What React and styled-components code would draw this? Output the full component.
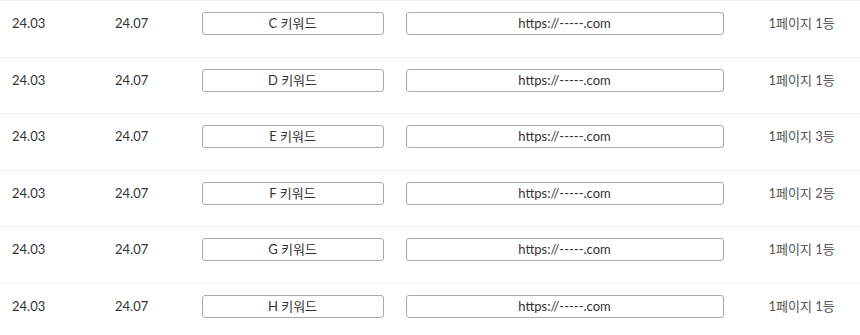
import React from "react";
import styled, { createGlobalStyle } from "styled-components";

const GlobalStyle = createGlobalStyle`
  html, body {
    margin: 0;
    padding: 0;
    background: #ffffff;
  }
  body {
    font-family: Lato, "Noto Sans CJK KR", sans-serif;
    color: #333333;
  }
`;

const Table = styled.div`
  width: 860px;
  display: flex;
  flex-direction: column;
`;

const Row = styled.div`
  box-sizing: border-box;
  height: 56.6px;
  border-top: 1px solid #f1f1f1;
  display: grid;
  grid-template-columns: 103px 86.5px 204px 363px 1fr;
  align-items: start;
  padding: 11px 0 0 12px;
`;

const Cell = styled.div`
  font-size: 13px;
  line-height: 23px;
  color: ${(p) => p.$color || "#333333"};
  white-space: nowrap;
`;

const Field = styled.div`
  box-sizing: border-box;
  width: ${(p) => p.$width}px;
  height: 23px;
  border: 1px solid #a9a9a9;
  border-radius: 3px;
  font-size: 13px;
  line-height: 21px;
  text-align: center;
  color: #333333;
  white-space: nowrap;
`;

const rows = [
  { kw: "C", rank: "1페이지 1등" },
  { kw: "D", rank: "1페이지 1등" },
  { kw: "E", rank: "1페이지 3등" },
  { kw: "F", rank: "1페이지 2등" },
  { kw: "G", rank: "1페이지 1등" },
  { kw: "H", rank: "1페이지 1등" },
];

export default function App() {
  return (
    <>
      <GlobalStyle />
      <Table>
        {rows.map((r) => (
          <Row key={r.kw}>
            <Cell>24.03</Cell>
            <Cell>24.07</Cell>
            <Field $width={182}>{r.kw} 키워드</Field>
            <Field $width={318}>https://-----.com</Field>
            <Cell $color="#555555">{r.rank}</Cell>
          </Row>
        ))}
      </Table>
    </>
  );
}
